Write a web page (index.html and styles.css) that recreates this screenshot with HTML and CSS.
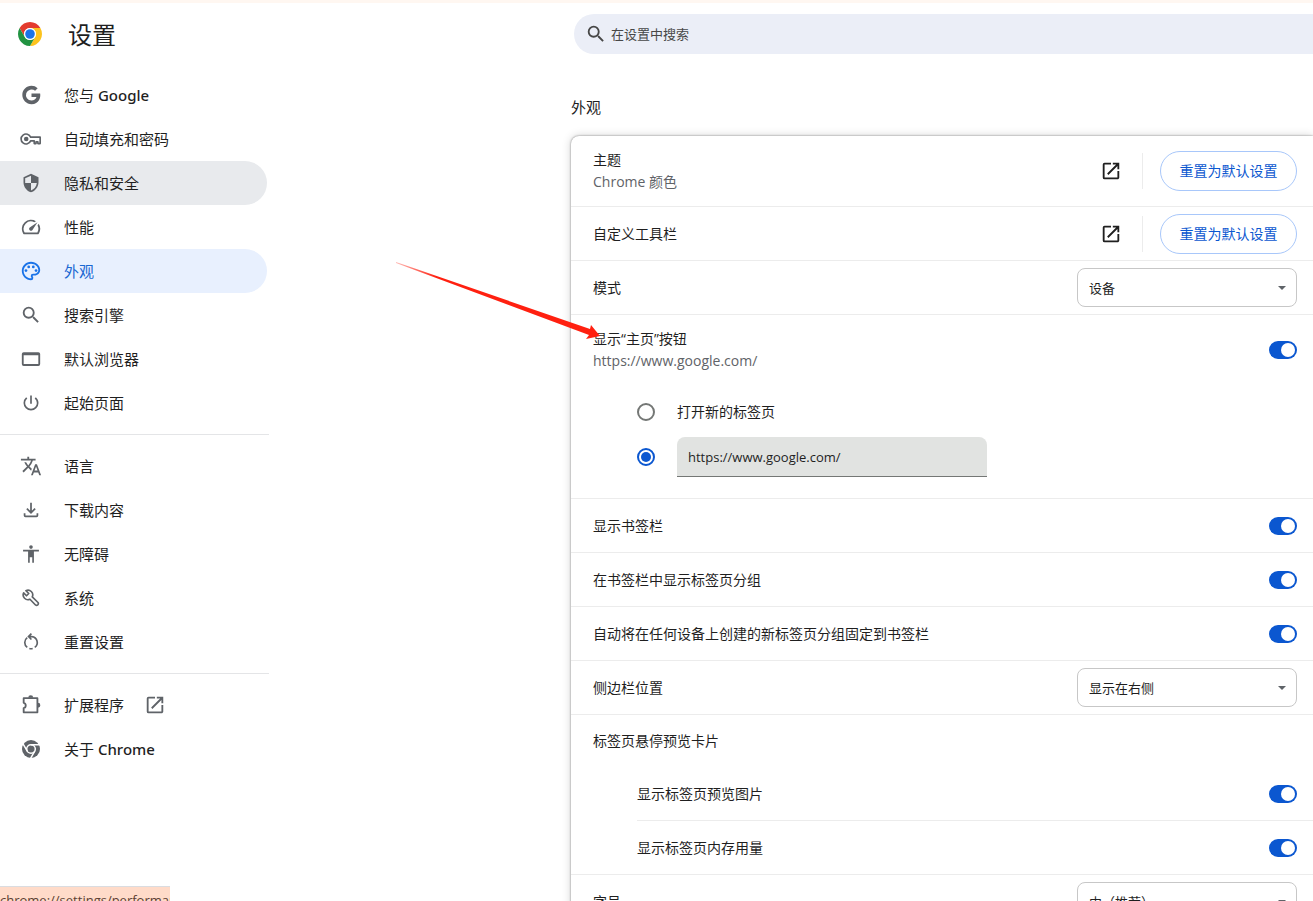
FILE: index.html
```html
<!DOCTYPE html>
<html lang="zh-CN">
<head>
<meta charset="utf-8">
<title>设置 - 外观</title>
<link rel="stylesheet" href="styles.css">
</head>
<body>
<svg class="sprite" aria-hidden="true">
  <symbol id="open" viewBox="0 0 24 24"><path d="M19 19H5V5h7V3H5a2 2 0 0 0-2 2v14a2 2 0 0 0 2 2h14c1.100 0 2-.9 2-2v-7h-2v7zM14 3v2h3.590l-9.830 9.830 1.410 1.410L19 6.410V10h2V3h-7z"/></symbol>
  <symbol id="search" viewBox="0 0 24 24"><path d="M15.500 14h-.79l-.28-.27A6.470 6.470 0 0 0 16 9.500 6.500 6.500 0 1 0 9.500 16c1.610 0 3.090-.59 4.230-1.570l.27.28v.79l5 4.990L20.490 19l-4.990-5zm-6 0C7.010 14 5 11.990 5 9.500S7.010 5 9.500 5 14 7.010 14 9.500 11.990 14 9.500 14z"/></symbol>
</svg>

<aside class="sidebar">
  <header class="brand">
    <svg class="logo" viewBox="0 0 48 48" aria-hidden="true">
      <path fill="#e33b2e" d="M24 12h20.780A24 24 0 0 0 3.220 12L13.610 30A12 12 0 0 1 24 12z"/>
      <path fill="#fcc31e" d="M34.390 30L24 48A24 24 0 0 0 44.780 12H24a12 12 0 0 1 10.390 18z"/>
      <path fill="#229342" d="M13.610 30L3.220 12A24 24 0 0 0 24 48l10.390-18A12 12 0 0 1 13.610 30z"/>
      <circle cx="24" cy="24" r="12" fill="#fff"/><circle cx="24" cy="24" r="9.600" fill="#1a73e8"/>
    </svg>
    <h1 class="title">设置</h1>
  </header>
  <nav class="menu">
    <a class="item" href="#people"><span class="icon"><svg class="i22" viewBox="0 0 24 24"><path d="M12.545 10.239v3.821h5.445c-.712 2.315-2.647 3.972-5.445 3.972a6.032 6.032 0 1 1 3.921-10.611l2.814-2.814A9.969 9.969 0 0 0 12.545 2C7.021 2 2.543 6.477 2.543 12s4.478 10 10.002 10c8.396 0 10.249-7.850 9.426-11.748z"/></svg></span><span>您与 <span class="latin">Google</span></span></a>
    <a class="item" href="#autofill"><span class="icon"><svg class="i22" viewBox="0 0 24 24"><g fill="none" stroke="currentColor" stroke-width="1.800"><path d="M11.600 10A5.400 5.400 0 1 0 11.600 14H15.500V17H17.500V15H19.500V17H22V10z" stroke-linejoin="round"/></g><circle cx="6.800" cy="12" r="2.500"/></svg></span><span>自动填充和密码</span></a>
    <a class="item hover" href="#privacy"><span class="icon"><svg class="i20" viewBox="0 0 24 24"><path d="M12 1L3 5v6c0 5.550 3.840 10.740 9 12 5.160-1.260 9-6.450 9-12V5l-9-4zm0 10.990h7c-.53 4.120-3.280 7.790-7 8.940V12H5V6.300l7-3.110v8.800z"/></svg></span><span>隐私和安全</span></a>
    <a class="item" href="#performance"><span class="icon"><svg class="i22" viewBox="0 0 24 24"><path d="M20.380 8.570l-1.230 1.850a8 8 0 0 1-.22 7.580H5.070A8 8 0 0 1 15.580 6.850l1.850-1.230A10 10 0 0 0 3.350 19a2 2 0 0 0 1.720 1h13.850a2 2 0 0 0 1.740-1 10 10 0 0 0-.27-10.440zm-9.790 6.840a2 2 0 0 0 2.830 0l5.660-8.490-8.490 5.660a2 2 0 0 0 0 2.830z"/></svg></span><span>性能</span></a>
    <a class="item selected" href="#appearance" aria-current="page"><span class="icon"><svg class="i22" viewBox="0 0 24 24"><path d="M12 22C6.490 22 2 17.510 2 12S6.490 2 12 2s10 4.040 10 9c0 3.310-2.690 6-6 6h-1.770c-.28 0-.5.22-.5.5 0 .12.05.23.13.33.41.47.64 1.060.64 1.670A2.500 2.500 0 0 1 12 22zm0-18c-4.410 0-8 3.590-8 8s3.590 8 8 8c.28 0 .5-.22.5-.5a.54.54 0 0 0-.14-.35c-.41-.46-.63-1.050-.63-1.650a2.500 2.500 0 0 1 2.500-2.500H16c2.210 0 4-1.790 4-4 0-3.860-3.590-7-8-7z"/><circle cx="6.500" cy="11.500" r="1.500"/><circle cx="9.500" cy="7.500" r="1.500"/><circle cx="14.500" cy="7.500" r="1.500"/><circle cx="17.500" cy="11.500" r="1.500"/></svg></span><span>外观</span></a>
    <a class="item" href="#search-engine"><span class="icon"><svg class="i22"><use href="#search"/></svg></span><span>搜索引擎</span></a>
    <a class="item" href="#default-browser"><span class="icon"><svg class="i22" viewBox="0 0 24 24"><path d="M20 4.500H4a2 2 0 0 0-2 2v11a2 2 0 0 0 2 2h16a2 2 0 0 0 2-2v-11a2 2 0 0 0-2-2zm0 13H4v-9.500h16z"/></svg></span><span>默认浏览器</span></a>
    <a class="item" href="#on-startup"><span class="icon"><svg class="i20" viewBox="0 0 24 24"><path d="M13 3h-2v10h2V3zm4.830 2.170l-1.420 1.420A6.920 6.920 0 0 1 19 12a7 7 0 0 1-14 0c0-2.190 1.010-4.140 2.580-5.420L6.170 5.170A8.930 8.930 0 0 0 3 12a9 9 0 0 0 18 0c0-2.740-1.230-5.180-3.170-6.830z"/></svg></span><span>起始页面</span></a>
  </nav>
  <hr class="rule">
  <nav class="menu">
    <a class="item" href="#languages"><span class="icon"><svg class="i22" viewBox="0 0 24 24"><path d="M12.870 15.070l-2.540-2.510.03-.03A17.520 17.520 0 0 0 14.070 6H17V4h-7V2H8v2H1v1.990h11.170C11.500 7.920 10.440 9.750 9 11.350 8.070 10.320 7.300 9.190 6.690 8h-2c.73 1.630 1.730 3.170 2.980 4.560l-5.090 5.020L4 19l5-5 3.110 3.110.76-2.040zM18.500 10h-2L12 22h2l1.120-3h4.750L21 22h2l-4.500-12zm-2.620 7l1.620-4.330L19.120 17h-3.240z"/></svg></span><span>语言</span></a>
    <a class="item" href="#downloads"><span class="icon"><svg class="i22" viewBox="0 0 24 24"><path fill="none" stroke="currentColor" stroke-width="1.900" d="M12 4v10.500M7.500 10.500l4.500 4.500 4.500-4.500M5 15.500V18q0 1 1 1h12q1 0 1-1v-2.500"/></svg></span><span>下载内容</span></a>
    <a class="item" href="#accessibility"><span class="icon"><svg class="i20" viewBox="0 0 24 24"><path d="M12 1.500a2.200 2.200 0 1 1 0 4.400 2.200 2.200 0 0 1 0-4.400zM21.500 9H15.500v13.500h-2V16h-3v6.500h-2V9H2.500V7h19z"/></svg></span><span>无障碍</span></a>
    <a class="item" href="#system"><span class="icon"><svg class="i18" viewBox="0 0 24 24"><path fill="none" stroke="currentColor" stroke-width="2.200" stroke-linejoin="round" d="M2.200 5.200A6.300 6.300 0 0 0 10.600 13.600L18 21.300Q19.500 22.500 21 21.100 22.500 19.500 21.300 18L13.700 10.500A6.300 6.300 0 0 0 5.200 2.200L9 6 6 9z"/></svg></span><span>系统</span></a>
    <a class="item" href="#reset"><span class="icon"><svg class="i20" viewBox="0 0 24 24"><path fill="none" stroke="currentColor" stroke-width="2" d="M9 5.500h4M12.500 2L9 5.500 12.500 9M13 5.500A7.200 7.200 0 0 1 16.500 18.500M14 19.800A7.200 7.200 0 0 1 10 19.800M7.500 18.500A7.200 7.200 0 0 1 7.500 6.800"/></svg></span><span>重置设置</span></a>
  </nav>
  <hr class="rule">
  <nav class="menu">
    <a class="item" href="#extensions"><span class="icon"><svg class="i22" viewBox="0 0 24 24"><path fill="none" stroke="currentColor" stroke-width="2" stroke-linejoin="round" d="M4 4.500h15v15.500H4v-4.600c3-.6 3-5.200 0-5.800z"/><path d="M9 4a2.700 2.700 0 0 1 5.400 0zM19.500 9.500a2.700 2.700 0 0 1 0 5.400z"/></svg></span><span>扩展程序</span><svg class="i22 external"><use href="#open"/></svg></a>
    <a class="item" href="#about"><span class="icon"><svg class="i18" viewBox="0 0 48 48"><circle cx="24" cy="24" r="24"/><g fill="none" stroke="#fff" stroke-width="4"><circle cx="24" cy="24" r="11.500"/><path d="M24 12.500h24M14 29.700L2 9M34 29.700L22 50.500"/></g></svg></span><span>关于 <span class="latin">Chrome</span></span></a>
  </nav>
</aside>

<main class="main">
  <label class="searchbar"><svg class="i22"><use href="#search"/></svg><input type="search" placeholder="在设置中搜索" aria-label="在设置中搜索"></label>
  <h2 class="heading">外观</h2>
  <section class="card">
    <div class="row tall">
      <div class="text"><div>主题</div><div class="sub">Chrome 颜色</div></div>
      <button class="iconbtn" type="button" aria-label="打开主题背景"><svg class="i22"><use href="#open"/></svg></button>
      <button class="pill" type="button">重置为默认设置</button>
    </div>
    <div class="row">
      <div class="text">自定义工具栏</div>
      <button class="iconbtn" type="button" aria-label="打开自定义工具栏"><svg class="i22"><use href="#open"/></svg></button>
      <button class="pill" type="button">重置为默认设置</button>
    </div>
    <div class="row">
      <label class="text" for="mode">模式</label>
      <span class="select"><select id="mode"><option>设备</option><option>浅色</option><option>深色</option></select></span>
    </div>
    <div class="group home">
      <div class="row tall">
        <label class="text" for="home">显示“主页”按钮<span class="sub">https://www.google.com/</span></label>
        <input class="toggle" id="home" type="checkbox" checked>
      </div>
      <div class="choice"><input class="radio" type="radio" name="home-page" id="newtab"><label for="newtab">打开新的标签页</label></div>
      <div class="choice"><input class="radio" type="radio" name="home-page" aria-label="输入自定义网址" checked><input class="url" type="text" aria-label="自定义网址" value="https://www.google.com/"></div>
    </div>
    <div class="row"><label class="text" for="bookmarks">显示书签栏</label><input class="toggle" id="bookmarks" type="checkbox" checked></div>
    <div class="row"><label class="text" for="groups">在书签栏中显示标签页分组</label><input class="toggle" id="groups" type="checkbox" checked></div>
    <div class="row"><label class="text" for="pin">自动将在任何设备上创建的新标签页分组固定到书签栏</label><input class="toggle" id="pin" type="checkbox" checked></div>
    <div class="row">
      <label class="text" for="side">侧边栏位置</label>
      <span class="select"><select id="side"><option>显示在右侧</option><option>显示在左侧</option></select></span>
    </div>
    <div class="group">
      <div class="row subhead"><div class="text">标签页悬停预览卡片</div></div>
      <div class="nested">
        <div class="row"><label class="text" for="preview">显示标签页预览图片</label><input class="toggle" id="preview" type="checkbox" checked></div>
        <div class="row"><label class="text" for="memory">显示标签页内存用量</label><input class="toggle" id="memory" type="checkbox" checked></div>
      </div>
    </div>
    <div class="row">
      <label class="text" for="size">字号</label>
      <span class="select"><select id="size"><option>中（推荐）</option><option>大</option></select></span>
    </div>
  </section>
</main>

<svg class="pointer" viewBox="0 0 206 78" aria-hidden="true">
  <defs><linearGradient id="fade"><stop offset="0" stop-color="#ff2010" stop-opacity=".3"/><stop offset=".2" stop-color="#ff2010"/></linearGradient></defs>
  <path fill="url(#fade)" d="M0 0L194 67L195 63L204 74L190 77L193 73L0 1z"/>
</svg>
<div class="status">chrome://settings/performance</div>
</body>
</html>
```
FILE: styles.css
```css
* { box-sizing: border-box; }

body {
  margin: 0;
  height: 100vh;
  overflow: hidden;
  display: flex;
  border-top: 3px solid #fff7f1;
  background: #fff;
  color: #1f1f1f;
  font: 14px/22px "Open Sans", "Noto Sans CJK SC", sans-serif;
}

input, select, button { font: inherit; color: inherit; margin: 0; }
svg { display: block; fill: currentColor; flex: none; }

.sprite { display: none; }
.i18 { width: 18px; height: 18px; }
.i20 { width: 20px; height: 20px; }
.i22 { width: 22px; height: 22px; }

/* Sidebar */
.sidebar { flex: 0 0 269px; }
.brand { display: flex; align-items: center; gap: 26px; height: 70px; padding: 0 0 8px 18px; }
.logo { width: 24px; height: 24px; }
.title { margin: 0; padding-top: 2px; font-size: 24px; line-height: 32px; font-weight: 400; }
.item {
  display: flex;
  align-items: center;
  height: 44px;
  margin-right: 2px;
  padding: 0 20px;
  border-radius: 0 22px 22px 0;
  color: #1f1f1f;
  font-size: 15px;
  text-decoration: none;
}
.icon { display: grid; place-items: center; width: 22px; margin-right: 22px; color: #5f6368; }
.external { margin-left: 20px; color: #5f6368; }
.latin { font-family: "Noto Sans", sans-serif; font-weight: 500; }
.hover { background: #e8eaed; }
.selected { background: #e8f0fe; color: #1967d2; }
.selected .icon { color: #1a73e8; }
.rule { margin: 9px 0; border: 0; border-top: 1px solid #e4e5e7; }

/* Content */
.main { flex: 1; min-width: 0; margin-left: 302px; padding-top: 11px; }
.searchbar {
  display: flex;
  align-items: center;
  gap: 4px;
  height: 40px;
  margin-left: 3px;
  padding-left: 11px;
  border-radius: 20px 0 0 20px;
  background: #ebeef7;
  color: #474747;
}
.searchbar input {
  flex: 1;
  min-width: 0;
  padding: 0;
  border: 0;
  outline: 0;
  background: none;
  font-size: 13px;
}
.searchbar input::placeholder { color: #474747; opacity: 1; }
.heading { margin: 42px 0 18px; font-size: 15px; line-height: 22px; font-weight: 400; }

.card {
  border-radius: 8px 0 0 8px;
  background: #fff;
  box-shadow: 0 0 2px rgba(0, 0, 0, .5), 0 0 10px rgba(0, 0, 0, .18);
}
.row {
  display: flex;
  align-items: center;
  height: 54px;
  padding: 0 16px 0 22px;
  border-bottom: 1px solid #ececec;
}
.tall { height: 71px; }
.text { flex: 1; min-width: 0; }
.sub { display: block; color: #5f6368; }
.group { border-bottom: 1px solid #ececec; }
.group > .row, .nested .row:last-child { border-bottom: 0; }
.home { padding-bottom: 18px; }
.home .tall { height: 70px; margin-bottom: 5px; }
.subhead { height: 52px; }
.nested { padding-left: 66px; }
.nested .row { padding-left: 0; }
.nested .row:last-child { height: 53px; }

.iconbtn { padding: 7px 20px 7px 0; border: 0; border-right: 1px solid #ececec; background: none; }
.pill {
  min-width: 137px;
  height: 40px;
  margin-left: 17px;
  padding: 0 18px;
  border: 1px solid #a8c7fa;
  border-radius: 20px;
  background: #fff;
  color: #0b57d0;
}

.select { position: relative; width: 220px; }
.select select {
  width: 100%;
  height: 39px;
  padding: 0 28px 0 11px;
  border: 1px solid #c7c7c7;
  border-radius: 8px;
  background: #fff;
  appearance: none;
  font-size: 13px;
}
.select::after {
  content: "";
  position: absolute;
  right: 11px;
  top: 18px;
  border: 4px solid transparent;
  border-top-color: #5f6368;
  border-bottom: 0;
}

.toggle {
  display: flex;
  align-items: center;
  justify-content: flex-end;
  width: 28px;
  height: 18px;
  padding-right: 2px;
  border-radius: 9px;
  background: #0b57d0;
  appearance: none;
}
.toggle::after { content: ""; width: 14px; height: 14px; border-radius: 50%; background: #fff; }

.choice { display: flex; align-items: center; gap: 22px; height: 44px; padding-left: 66px; }
.choice:last-child { height: 46px; }
.radio {
  display: grid;
  place-items: center;
  width: 18px;
  height: 18px;
  border: 2px solid #747775;
  border-radius: 50%;
  appearance: none;
}
.radio:checked { border-color: #0b57d0; }
.radio:checked::after { content: ""; width: 10px; height: 10px; border-radius: 50%; background: #0b57d0; }
.url {
  width: 310px;
  height: 40px;
  padding: 0 11px;
  border: 0;
  border-bottom: 1px solid #747775;
  border-radius: 8px 8px 0 0;
  outline: 0;
  background: #e1e3e1;
  font-size: 13px;
}

/* Overlays */
.pointer { position: absolute; left: 396px; top: 262px; width: 206px; height: 78px; pointer-events: none; }
.status {
  position: absolute;
  left: 0;
  bottom: 0;
  width: 170px;
  height: 15px;
  padding-top: 2px;
  overflow: hidden;
  border-top: 1px solid #dadce0;
  background: #ffdbc9;
  color: #5c4033;
  font-size: 13px;
  white-space: nowrap;
}
```
